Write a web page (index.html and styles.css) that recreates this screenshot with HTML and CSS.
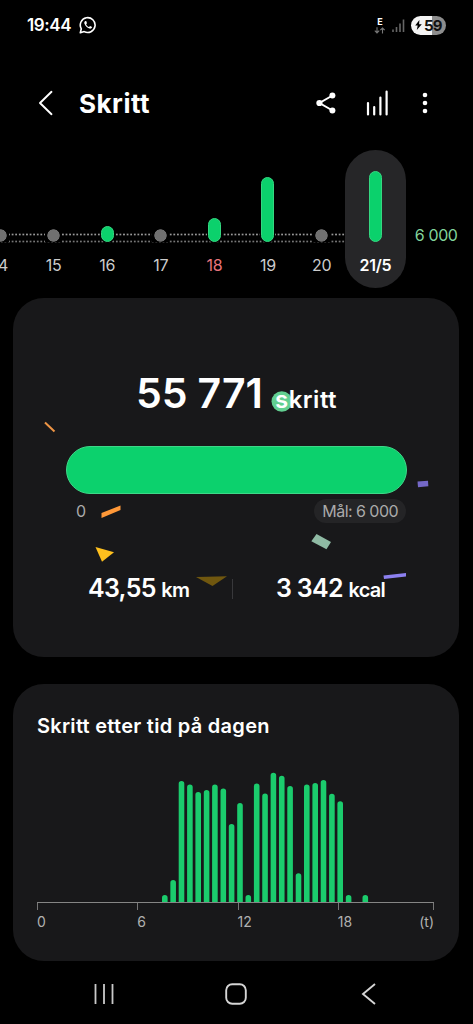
FILE: index.html
```html
<!DOCTYPE html>
<html lang="nb">
<head>
<meta charset="utf-8">
<title>Skritt</title>
<link rel="stylesheet" href="styles.css">
</head>
<body>
<div class="screen">
  <header class="status">
    <span class="clock">19:44</span>
    <svg class="whatsapp" width="18" height="18" viewBox="0 0 18 18"><path d="M1.3 16.7 2.3 12.8A7.4 7.4 0 1 1 5.2 15.6Z" fill="none" stroke="#fff" stroke-width="1.6" stroke-linejoin="round"/><path d="M6.5 4.9C5.2 5.6 5 6.8 5.6 8.1c.9 2.200 2.500 3.700 4.700 4.500 1.300.4 2.400-.1 2.800-1.500l-2-1.100-1.100 1.100C8.700 10.500 7.700 9.500 7.100 8.200L8 7.200 7.200 5Z" fill="#fff"/></svg>
    <div class="status-right">
      <div class="network"><span>E</span><svg width="12" height="7" viewBox="0 0 12 7"><path d="M3 .3v5.500M.8 3.700 3 5.900 5.200 3.700M8.500 6.500V1M6.300 3.200 8.500 1l2.200 2.200" fill="none" stroke="#777" stroke-width="1.100"/></svg></div>
      <svg class="signal" width="13" height="13" viewBox="0 0 13 13"><path d="M1 13v-2.500M4.500 13V8M8 13V4.500M11.500 13V0.500" stroke="#666" stroke-width="1.600"/></svg>
      <div class="battery"><svg width="7" height="10" viewBox="0 0 7 10"><path d="M4.400 0 .2 5.400h2.500L1.800 10 6.800 4.200H4.100Z" fill="#000"/></svg><span>59</span></div>
    </div>
  </header>

  <nav class="toolbar">
    <svg class="back" width="16" height="26" viewBox="0 0 16 26"><path d="M13.500 1.800 2 13 13.500 24.200" fill="none" stroke="#fff" stroke-width="1.900" stroke-linecap="round" stroke-linejoin="round"/></svg>
    <h1>Skritt</h1>
    <div class="actions">
      <svg width="20" height="22" viewBox="0 0 20 22"><path d="M16.500 3.500 3.500 11l13 7.500" fill="none" stroke="#fff" stroke-width="2"/><g fill="#fff"><circle cx="16.400" cy="3.600" r="3"/><circle cx="3.400" cy="11" r="3.100"/><circle cx="16.400" cy="18.600" r="3"/></g></svg>
      <svg class="bars-icon" width="23" height="26" viewBox="0 0 23 26"><path d="M2 24.500V13M8.200 24.500V17M14.400 24.500V7.500M20.600 24.500V1.500" stroke="#fff" stroke-width="2.200" stroke-linecap="round"/></svg>
      <svg class="more" width="6" height="22" viewBox="0 0 6 22"><g fill="#fff"><circle cx="3" cy="3" r="2.300"/><circle cx="3" cy="11" r="2.300"/><circle cx="3" cy="19" r="2.300"/></g></svg>
    </div>
  </nav>

  <section class="week">
    <div class="days">
      <div class="day"><i class="dot"></i><span>14</span></div>
      <div class="day"><i class="dot"></i><span>15</span></div>
      <div class="day"><i class="col" style="height:16px"></i><span>16</span></div>
      <div class="day"><i class="dot"></i><span>17</span></div>
      <div class="day holiday"><i class="col" style="height:24px"></i><span>18</span></div>
      <div class="day"><i class="col" style="height:65px"></i><span>19</span></div>
      <div class="day"><i class="dot"></i><span>20</span></div>
      <div class="day selected"><i class="col" style="height:71px"></i><span>21/5</span></div>
    </div>
    <span class="goal-label">6 000</span>
  </section>

  <main>
    <section class="card summary">
      <div class="total"><strong>55 771</strong><span class="unit">skritt</span></div>
      <div class="progress"></div>
      <div class="range"><span class="zero">0</span><span class="goal">Mål: 6 000</span></div>
      <div class="stats">
        <div class="stat km">43,55 <small>km</small></div>
        <div class="divider"></div>
        <div class="stat kcal">3 342 <small>kcal</small></div>
      </div>
      <svg class="confetti" width="446" height="359" viewBox="13 298 446 359">
        <circle cx="281.800" cy="401.500" r="10.300" fill="#62cf91"/>
        <path d="M45 422.500 54.500 431.500" stroke="#ef9545" stroke-width="2"/>
        <path d="M101.500 513 120.500 505.500V510L101.500 518Z" fill="#ff9838"/>
        <path d="M417.500 481.500 428 480.800 428.300 486.300 418 487.300Z" fill="#7468c7"/>
        <path d="M316.500 534 331 542 326.500 549.300 311.300 541.300Z" fill="#8fbaa4"/>
        <path d="M95.500 547 114 552.300 102 561.800Z" fill="#ffc01e"/>
        <path d="M196 577 227 576.200 212.500 586Z" fill="#70570f"/>
        <path d="M383.500 575.500 406 573 406 576.500 384 579Z" fill="#8c80f0"/>
      </svg>
    </section>

    <section class="card hourly">
      <h2>Skritt etter tid på dagen</h2>
      <svg class="plot" width="397" height="163" viewBox="37 739 397 163">
        <path d="M164.800 910V897.800M173.150 910V882.800M181.500 910V783.800M189.900 910V787.300M198.200 910V794.800M206.600 910V792.800M214.900 910V787.300M223.300 910V791.300M231.600 910V826.800M240 910V805.800M248.300 910V897.800M256.700 910V786.300M265.050 910V796.300M273.400 910V775.500M281.750 910V778.500M290.100 910V788.800M298.500 910V876.100M306.800 910V787.300M315.200 910V785.800M323.500 910V782.800M331.900 910V796.500M340.200 910V804.100M348.600 910V897.800M365.300 910V897.800" stroke="#1bcc6d" stroke-width="5.600" stroke-linecap="round"/>
      </svg>
      <div class="axis"><span>0</span><span>6</span><span>12</span><span>18</span><span class="end">(t)</span></div>
    </section>
  </main>

  <footer class="navbar">
    <svg width="22" height="22" viewBox="0 0 22 22"><path d="M2.500 1v20M11 1v20M19.500 1v20" stroke="#c9c9c9" stroke-width="1.800"/></svg>
    <svg class="home" width="22" height="22" viewBox="0 0 22 22"><rect x="1.200" y="1.200" width="19.600" height="19.600" rx="6" fill="none" stroke="#d5d5d5" stroke-width="1.900"/></svg>
    <svg width="16" height="22" viewBox="0 0 16 22"><path d="M14 1 2 11l12 10" fill="none" stroke="#d5d5d5" stroke-width="1.900"/></svg>
  </footer>
</div>
</body>
</html>
```
FILE: styles.css
```css
* { box-sizing: border-box; }
body { margin: 0; background: #000; color: #fff; font-family: Inter, Roboto, sans-serif; }
svg { display: block; flex: none; }
.screen { width: 473px; height: 1024px; overflow: hidden; display: flex; flex-direction: column; white-space: nowrap; }

.status { height: 50px; padding: 0 27px; display: flex; align-items: center; }
.clock { font-size: 17px; font-weight: 600; letter-spacing: -0.4px; width: 52px; }
.status-right { margin-left: auto; display: flex; align-items: center; }
.network { width: 12px; display: flex; flex-direction: column; align-items: center; font-size: 9px; line-height: 9px; font-weight: 700; margin-right: 6px; gap: 1px; }
.signal { margin-right: 6px; }
.battery { width: 35px; height: 19px; border-radius: 10px; background: linear-gradient(90deg, #f4f4f4 60%, #8d8d8d 60%); color: #111; display: flex; align-items: center; padding-left: 4px; gap: 2px; font-size: 15px; font-weight: 700; letter-spacing: -0.9px; }

.toolbar { height: 100px; padding: 6px 45px 0 38px; display: flex; align-items: center; }
.toolbar h1 { margin: 0 0 0 25px; font-size: 26px; font-weight: 700; letter-spacing: 0.5px; }
.actions { margin-left: auto; display: flex; align-items: center; }
.bars-icon { margin: 0 33px 0 30px; }

.week { height: 138px; display: flex; background: radial-gradient(circle, #999 0.7px, transparent 1.3px) 0 83px / 3.600px 3px repeat-x, radial-gradient(circle, #777 0.7px, transparent 1.3px) 0 90px / 3.600px 3px repeat-x; flex: none; }
.days { display: flex; margin-left: -26.800px; flex: none; }
.day { width: 53.600px; height: 138px; padding-bottom: 12px; display: flex; flex-direction: column; align-items: center; justify-content: flex-end; color: #ccc; font-size: 16px; flex: none; }
.day span { height: 22px; line-height: 22px; margin-top: 12px; letter-spacing: -0.3px; }
.dot { width: 17px; height: 13px; background: radial-gradient(circle 6.500px, #707070 90%, #000 100%); }
.col { width: 13px; border-radius: 7px; background: #0bd16c; border: 1px solid #35d781; box-shadow: 0 0 0 1px #000; }
.holiday { color: #e8747c; }
.selected { width: 61px; margin-left: -3.500px; border-radius: 31px; background: #262628; color: #fff; }
.selected span { font-weight: 600; }
.selected .col { box-shadow: none; }
.goal-label { flex: 1; background: #000; color: #82d49b; font-size: 16px; line-height: 20px; letter-spacing: -0.4px; padding: 75px 0 0 9px; }

main { display: flex; flex-direction: column; gap: 27px; padding: 10px 14px 0 13px; }
.card { background: #18181a; border-radius: 31px; }
.summary { height: 359px; position: relative; padding-top: 71px; }
.total { height: 48px; display: flex; align-items: baseline; padding-left: 123px; line-height: 48px; position: relative; z-index: 1; }
.total strong { font-size: 41px; font-weight: 600; letter-spacing: -0.100px; width: 139px; }
.unit { font-size: 24px; font-weight: 600; letter-spacing: 0.500px; }
.progress { height: 48px; margin: 29px 52px 0 53px; border-radius: 24px; border: 1px solid #3ed888; background: #0cd16d; }
.range { display: flex; justify-content: space-between; align-items: center; height: 24px; margin: 5px 53px 0 63px; color: #aaa; font-size: 16px; }
.goal { height: 24px; line-height: 24px; padding: 0 8px; border-radius: 12px; background: #242426; letter-spacing: -0.550px; }
.stats { height: 30px; margin-top: 51px; display: flex; align-items: center; padding-left: 75px; position: relative; z-index: 1; }
.stat { font-size: 25px; font-weight: 600; letter-spacing: -0.700px; line-height: 30px; }
.stat small { font-size: 20px; }
.km { width: 144px; }
.divider { width: 1px; height: 20px; background: #38383b; margin-right: 43px; }
.confetti { position: absolute; inset: 0; }

.hourly { height: 277px; padding: 29px 25px 0 24px; }
.hourly h2 { margin: 0; height: 26px; line-height: 26px; font-size: 20px; font-weight: 600; letter-spacing: 0.280px; }
.plot { overflow: hidden; }
.axis { height: 40px; border-top: 1px solid #858585; display: grid; grid-template-columns: 100.200px 100.300px 100.300px 48px 1fr; color: #b0b0b0; font-size: 14px; background: repeating-linear-gradient(90deg, #777 0 1px, transparent 1px 100.300px) 0 0 / 302px 7px no-repeat, linear-gradient(#777, #777) 100% 0 / 1px 7px no-repeat; }
.axis span { padding-top: 10px; line-height: 18px; }
.axis .end { text-align: right; }

.navbar { height: 63px; display: flex; align-items: center; padding: 2px 96px 0 93px; justify-content: space-between; }
.home { margin-right: 4px; }
```
